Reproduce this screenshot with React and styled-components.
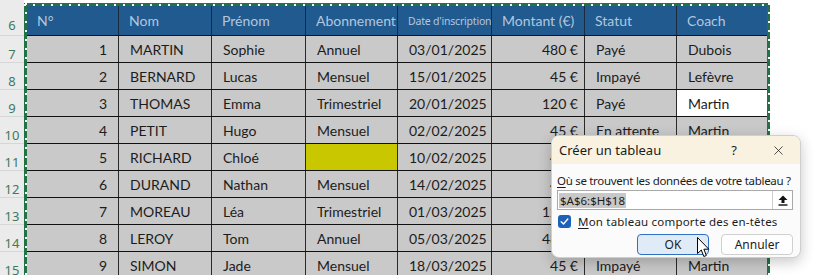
import React from 'react';
import styled, { createGlobalStyle } from 'styled-components';
import { X } from 'lucide-react';

const GlobalStyle = createGlobalStyle`
    html, body {
        margin: 0;
        padding: 0;
        background: #ffffff;
    }
    body {
        width: 834px;
        height: 275px;
        overflow: hidden;
    }
`;

// Column widths, border included
const COLS = '92px 93px 94px 92px 94px 93px 92px 90px';

const Sheet = styled.div`
    position: relative;
    display: flex;
    align-items: flex-start;
    width: 834px;
    height: 275px;
    overflow: hidden;
    font-family: Lato, 'Liberation Sans', sans-serif;
`;

const RowHeaders = styled.div`
    display: flex;
    flex-direction: column;
    width: 24px;
    flex-shrink: 0;
    background: #ebebeb;
`;

const RowNum = styled.div`
    height: ${p => (p.$first ? 36 : 27)}px;
    box-sizing: border-box;
    border-bottom: 1px solid #d6d6d6;
    display: flex;
    align-items: flex-end;
    justify-content: center;
    padding-bottom: ${p => (p.$first ? 3 : 1)}px;
    font-family: 'Noto Sans', sans-serif;
    font-size: 13px;
    line-height: 14px;
    color: #3f7a58;
`;

// Marching ants round the copied range
const Range = styled.div`
    position: relative;
    margin-top: 3px;
    border: 3px solid #217346;
    width: 740px;

    &::after {
        content: '';
        position: absolute;
        inset: -3px;
        pointer-events: none;
        background:
            repeating-linear-gradient(90deg, #fff 0 2px, transparent 2px 9px) 0 1px / 100% 2px no-repeat,
            repeating-linear-gradient(180deg, #fff 0 2px, transparent 2px 9px) 1px 0 / 2px 100% no-repeat,
            repeating-linear-gradient(180deg, #fff 0 2px, transparent 2px 9px) right 0 top 0 / 2px 100% no-repeat;
    }
`;

const HeaderRow = styled.div`
    display: grid;
    grid-template-columns: ${COLS};
    height: 29px;
    background: #215a8e;
    border-bottom: 1px solid #111;
`;

const HeadCell = styled.div`
    display: flex;
    align-items: center;
    padding-left: 10px;
    border-right: 1px solid #1b2b3b;
    color: #b3c7de;
    font-size: ${p => (p.$small ? '10.5px' : '14px')};
    font-family: ${p => (p.$small ? "'Noto Sans', sans-serif" : 'inherit')};
    letter-spacing: ${p => (p.$small ? '-0.2px' : '0')};
    white-space: nowrap;
    overflow: hidden;

    &:last-child {
        border-right: none;
    }
`;

const BodyRow = styled.div`
    display: grid;
    grid-template-columns: ${COLS};
    height: 27px;
    box-sizing: border-box;
    border-bottom: 1px solid #111;
    background: #c9c9c9;
`;

const Cell = styled.div`
    display: flex;
    align-items: center;
    justify-content: ${p => (p.$right ? 'flex-end' : 'flex-start')};
    padding: 0 ${p => (p.$right ? p.$pr || 8 : 0)}px 0 ${p => (p.$right ? 0 : 11)}px;
    border-right: 1px solid #2a2a2a;
    background: ${p => p.$bg || 'transparent'};
    color: #1c1c1c;
    font-size: 14px;
    white-space: nowrap;
    overflow: hidden;

    &:last-child {
        border-right: none;
    }
`;

// Dialog
const Dialog = styled.div`
    position: absolute;
    left: 551px;
    top: 135px;
    width: 250px;
    height: 123px;
    box-sizing: border-box;
    border: 1px solid #cfcfcf;
    border-radius: 8px;
    background: #fbfbfb;
    box-shadow: 0 4px 14px rgba(0, 0, 0, 0.22);
    overflow: hidden;
    font-family: 'Noto Sans', sans-serif;
    font-size: 11.5px;
    color: #1b1b1b;
`;

const TitleBar = styled.div`
    display: flex;
    align-items: center;
    height: 28px;
    padding-left: 7px;
    background: #f9f2e1;
    font-size: 13px;
`;

const Title = styled.span`
    flex: 1;
`;

const TitleButton = styled.span`
    display: flex;
    align-items: center;
    justify-content: center;
    width: 44px;
    height: 28px;
    font-size: 13px;
`;

const DialogBody = styled.div`
    display: flex;
    flex-direction: column;
    padding: 8px 7px 0 5px;
`;

const Label = styled.div`
    height: 17px;
    line-height: 17px;
    white-space: nowrap;
    letter-spacing: ${p => p.$ls || 0}px;

    u {
        text-underline-offset: 2px;
    }
`;

const InputBox = styled.div`
    display: flex;
    align-items: center;
    height: 20px;
    box-sizing: border-box;
    margin-top: 1px;
    border: 1px solid #a9a9a9;
    background: #fff;
`;

const InputText = styled.span`
    flex: 1;
    display: flex;
    align-items: center;
    padding-left: 1px;

    span {
        background: #c8c8c8;
        padding: 0 1px;
        line-height: 15px;
    }
`;

const PickButton = styled.span`
    display: flex;
    align-items: center;
    justify-content: center;
    width: 19px;
    height: 18px;
    border-left: 1px solid #cfcfcf;
`;

const CheckRow = styled.div`
    display: flex;
    align-items: center;
    gap: 7px;
    height: 14px;
    margin-top: 4px;
    margin-left: 1px;
    white-space: nowrap;
`;

const CheckBox = styled.span`
    display: flex;
    align-items: center;
    justify-content: center;
    width: 13px;
    height: 13px;
    border-radius: 3px;
    background: #1d61b8;
`;

const ButtonRow = styled.div`
    display: flex;
    justify-content: flex-end;
    gap: 12px;
    margin-top: 6px;
`;

const Button = styled.span`
    display: flex;
    align-items: center;
    justify-content: center;
    width: 72px;
    height: 21px;
    box-sizing: border-box;
    border-radius: 4px;
    border: 1px solid ${p => (p.$primary ? '#2f6fc4' : '#d0d0d0')};
    background: ${p => (p.$primary ? '#e0ebf8' : '#fefefe')};
    font-size: 12px;
`;

const Cursor = styled.svg`
    position: absolute;
    left: 697px;
    top: 237px;
`;

const rows = [
    { n: 1, nom: 'MARTIN', prenom: 'Sophie', abo: 'Annuel', date: '03/01/2025', montant: '480 €', statut: 'Payé', coach: 'Dubois' },
    { n: 2, nom: 'BERNARD', prenom: 'Lucas', abo: 'Mensuel', date: '15/01/2025', montant: '45 €', statut: 'Impayé', coach: 'Lefèvre' },
    { n: 3, nom: 'THOMAS', prenom: 'Emma', abo: 'Trimestriel', date: '20/01/2025', montant: '120 €', statut: 'Payé', coach: 'Martin', coachBg: '#ffffff' },
    { n: 4, nom: 'PETIT', prenom: 'Hugo', abo: 'Mensuel', date: '02/02/2025', montant: '45 €', statut: 'En attente', coach: 'Martin' },
    { n: 5, nom: 'RICHARD', prenom: 'Chloé', abo: '', aboBg: '#c9c700', date: '10/02/2025', montant: '45 €', statut: 'Payé', coach: 'Dubois' },
    { n: 6, nom: 'DURAND', prenom: 'Nathan', abo: 'Mensuel', date: '14/02/2025', montant: '45 €', statut: 'Payé', coach: 'Lefèvre' },
    { n: 7, nom: 'MOREAU', prenom: 'Léa', abo: 'Trimestriel', date: '01/03/2025', montant: '120 €', statut: 'En attente', coach: 'Dubois' },
    { n: 8, nom: 'LEROY', prenom: 'Tom', abo: 'Annuel', date: '05/03/2025', montant: '480 €', statut: 'Payé', coach: 'Lefèvre' },
    { n: 9, nom: 'SIMON', prenom: 'Jade', abo: 'Mensuel', date: '18/03/2025', montant: '45 €', statut: 'Impayé', coach: 'Martin' },
    { n: 10, nom: 'LAURENT', prenom: 'Louis', abo: 'Annuel', date: '22/03/2025', montant: '480 €', statut: 'Payé', coach: 'Dubois' },
    { n: 11, nom: 'LEFEBVRE', prenom: 'Inès', abo: 'Mensuel', date: '28/03/2025', montant: '45 €', statut: 'Payé', coach: 'Martin' },
    { n: 12, nom: 'MICHEL', prenom: 'Arthur', abo: 'Trimestriel', date: '02/04/2025', montant: '120 €', statut: 'Impayé', coach: 'Lefèvre' },
];

const headers = ['N°', 'Nom', 'Prénom', 'Abonnement', "Date d'inscription", 'Montant (€)', 'Statut', 'Coach'];

const PickIcon = () => (
    <svg width="10" height="11" viewBox="0 0 10 11">
        <path d="M5 0.5 L9.5 5 H6.5 V8 H3.5 V5 H0.5 Z" fill="#111" />
        <rect x="0.5" y="9.3" width="9" height="1.4" fill="#111" />
    </svg>
);

const CheckIcon = () => (
    <svg width="9" height="9" viewBox="0 0 9 9">
        <path d="M1.2 4.8 L3.5 7 L7.8 2" fill="none" stroke="#fff" strokeWidth="1.4" strokeLinecap="round" strokeLinejoin="round" />
    </svg>
);

const App = () => (
    <>
        <GlobalStyle />
        <Sheet>
            <RowHeaders>
                {[6, 7, 8, 9, 10, 11, 12, 13, 14, 15, 16, 17, 18].map((r, i) => (
                    <RowNum key={r} $first={i === 0}>{r}</RowNum>
                ))}
            </RowHeaders>

            <Range>
                <HeaderRow>
                    {headers.map((h, i) => (
                        <HeadCell key={h} $small={i === 4}>{h}</HeadCell>
                    ))}
                </HeaderRow>
                {rows.map(r => (
                    <BodyRow key={r.n}>
                        <Cell $right $pr={11}>{r.n}</Cell>
                        <Cell>{r.nom}</Cell>
                        <Cell>{r.prenom}</Cell>
                        <Cell $bg={r.aboBg}>{r.abo}</Cell>
                        <Cell>{r.date}</Cell>
                        <Cell $right $pr={6}>{r.montant}</Cell>
                        <Cell>{r.statut}</Cell>
                        <Cell $bg={r.coachBg}>{r.coach}</Cell>
                    </BodyRow>
                ))}
            </Range>

            <Dialog>
                <TitleBar>
                    <Title>Créer un tableau</Title>
                    <TitleButton>?</TitleButton>
                    <TitleButton><X size={15} strokeWidth={1.2} /></TitleButton>
                </TitleBar>
                <DialogBody>
                    <Label $ls={-0.3}><u>O</u>ù se trouvent les données de votre tableau ?</Label>
                    <InputBox>
                        <InputText><span>$A$6:$H$18</span></InputText>
                        <PickButton><PickIcon /></PickButton>
                    </InputBox>
                    <CheckRow>
                        <CheckBox><CheckIcon /></CheckBox>
                        <Label $ls={0.2}><u>M</u>on tableau comporte des en-têtes</Label>
                    </CheckRow>
                    <ButtonRow>
                        <Button $primary>OK</Button>
                        <Button>Annuler</Button>
                    </ButtonRow>
                </DialogBody>
            </Dialog>

            <Cursor width="13" height="21" viewBox="0 0 13 21">
                <path d="M0.5 0.5 V16.5 L4.3 13 L6.8 19.5 L9.3 18.5 L6.9 12.2 H11.8 Z" fill="#fff" stroke="#000" strokeWidth="1" strokeLinejoin="round" />
            </Cursor>
        </Sheet>
    </>
);

export default App;
